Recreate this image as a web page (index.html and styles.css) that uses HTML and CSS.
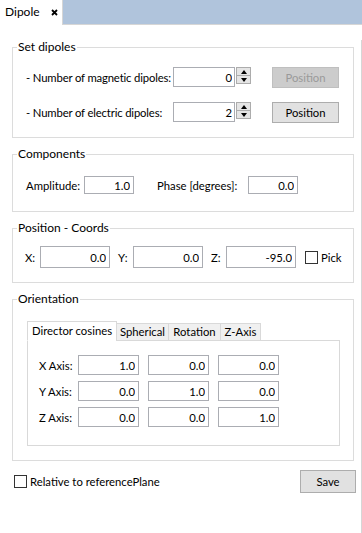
FILE: index.html
```html
<!DOCTYPE html>
<html lang="en">
<head>
  <meta charset="UTF-8" />
  <title>Dipole</title>
  <link rel="stylesheet" href="styles.css">
</head>
<body>
  <div class="doc-tabs">
    <div class="doc-tab">
      Dipole
      <svg class="close" width="7" height="7" viewBox="0 0 7 7">
        <path d="M1 1 L6 6 M6 1 L1 6" stroke="#000" stroke-width="1.8"/>
      </svg>
    </div>
    <div class="doc-tabs-rest"></div>
  </div>

  <div class="panel">
    <fieldset class="group">
      <legend>Set dipoles</legend>
      <div class="group-body dipoles">
        <div class="dipole-row">
          <span class="dipole-label">- Number of magnetic dipoles:</span>
          <div class="spin">
            <input class="field" value="0" readonly>
            <div class="spin-btns">
              <span class="spin-btn"><span class="arrow-up"></span></span>
              <span class="spin-btn"><span class="arrow-down"></span></span>
            </div>
          </div>
          <button class="btn btn-pos" disabled>Position</button>
        </div>
        <div class="dipole-row">
          <span class="dipole-label">- Number of electric dipoles:</span>
          <div class="spin">
            <input class="field" value="2" readonly>
            <div class="spin-btns">
              <span class="spin-btn"><span class="arrow-up"></span></span>
              <span class="spin-btn"><span class="arrow-down"></span></span>
            </div>
          </div>
          <button class="btn btn-pos">Position</button>
        </div>
      </div>
    </fieldset>

    <fieldset class="group">
      <legend>Components</legend>
      <div class="group-body components">
        <span class="amp-label">Amplitude:</span>
        <input class="field comp-field" value="1.0" readonly>
        <span class="phase-label">Phase [degrees]:</span>
        <input class="field comp-field" value="0.0" readonly>
      </div>
    </fieldset>

    <fieldset class="group">
      <legend>Position - Coords</legend>
      <div class="group-body coords">
        <span class="coord-label">X:</span>
        <input class="field coord-field" value="0.0" readonly>
        <span class="coord-label next">Y:</span>
        <input class="field coord-field" value="0.0" readonly>
        <span class="coord-label next">Z:</span>
        <input class="field coord-field" value="-95.0" readonly>
        <label class="check pick"><input type="checkbox"> Pick</label>
      </div>
    </fieldset>

    <fieldset class="group">
      <legend>Orientation</legend>
      <div class="group-body orientation">
        <div class="tab-strip">
          <div class="tab active">Director cosines</div>
          <div class="tab">Spherical</div>
          <div class="tab">Rotation</div>
          <div class="tab">Z-Axis</div>
        </div>
        <div class="tab-pane">
          <div class="axis-row">
            <span class="axis-label">X Axis:</span>
            <input class="field axis-field" value="1.0" readonly>
            <input class="field axis-field" value="0.0" readonly>
            <input class="field axis-field" value="0.0" readonly>
          </div>
          <div class="axis-row">
            <span class="axis-label">Y Axis:</span>
            <input class="field axis-field" value="0.0" readonly>
            <input class="field axis-field" value="1.0" readonly>
            <input class="field axis-field" value="0.0" readonly>
          </div>
          <div class="axis-row">
            <span class="axis-label">Z Axis:</span>
            <input class="field axis-field" value="0.0" readonly>
            <input class="field axis-field" value="0.0" readonly>
            <input class="field axis-field" value="1.0" readonly>
          </div>
        </div>
      </div>
    </fieldset>

    <div class="footer">
      <label class="check"><input type="checkbox"> Relative to referencePlane</label>
      <button class="btn btn-save">Save</button>
    </div>
  </div>
</body>
</html>
```

FILE: styles.css
```css
body {
  margin: 0;
  background: #fff;
  color: #000;
  font-family: Lato, "Noto Sans", sans-serif;
  font-size: 11.3px;
  white-space: nowrap;
}

/* document tab bar */
.doc-tabs {
  display: flex;
  height: 25px;
}
.doc-tab {
  width: 62px;
  box-sizing: border-box;
  padding: 4px 0 0 5px;
  background: #fff;
  line-height: 15px;
  font-size: 12px;
}
.close {
  margin-left: 8px;
}
.doc-tabs-rest {
  flex: 1;
  background: #b0c4dc;
  border-left: 1px solid #d6d6d6;
  border-bottom: 1px solid #d6d6d6;
}

.panel {
  height: 508px;
  box-sizing: border-box;
  border-right: 1px solid #d6d6d6;
  padding: 0 7px 0 12px;
}

/* group boxes */
.group {
  margin: 9px 0 0;
  padding: 0;
  border: 1px solid #dcdcdc;
  min-width: 0;
}
.group:first-child {
  margin-top: 15px;
}
.group legend {
  margin-left: 4px;
  padding: 0 1px;
  line-height: 14px;
  font-size: 12px;
}
.group-body {
  display: flex;
  align-items: center;
}

.field {
  box-sizing: border-box;
  margin: 0;
  border: 1px solid #abadb3;
  background: #fff;
  font: inherit;
  color: #000;
  text-align: right;
  padding: 0 3px;
  outline: none;
}

.btn {
  box-sizing: border-box;
  margin: 0;
  padding: 0;
  border: 1px solid #adadad;
  background: #e1e1e1;
  font: inherit;
  color: #000;
}
.btn:disabled {
  background: #cccccc;
  border-color: #bfbfbf;
  color: #9a9a9a;
}

/* set dipoles */
.dipoles {
  flex-direction: column;
  align-items: stretch;
  gap: 14px;
  padding: 13px 0 14px 13px;
}
.dipole-row {
  display: flex;
  align-items: center;
  height: 21px;
}
.dipole-label {
  width: 147px;
  flex-shrink: 0;
  letter-spacing: -0.15px;
}
.spin {
  display: flex;
  height: 20px;
  align-self: flex-start;
}
.spin .field {
  width: 62px;
  height: 20px;
  padding-right: 2px;
}
.spin-btns {
  display: flex;
  flex-direction: column;
  margin-left: 1px;
}
.spin-btn {
  box-sizing: border-box;
  width: 15px;
  height: 9px;
  border: 1px solid #acacac;
  background: #e5e5e5;
  display: flex;
  align-items: center;
  justify-content: center;
}
.spin-btn + .spin-btn {
  margin-top: -1px;
}
.arrow-up,
.arrow-down {
  width: 0;
  height: 0;
  border-left: 3px solid transparent;
  border-right: 3px solid transparent;
}
.arrow-up {
  border-bottom: 4px solid #000;
}
.arrow-down {
  border-top: 4px solid #000;
}
.btn-pos {
  width: 67px;
  height: 21px;
  margin-left: 21px;
}

/* components */
.components {
  padding: 15px 0 17px 13px;
}
.amp-label {
  width: 58px;
}
.comp-field {
  width: 50px;
  height: 18px;
}
.phase-label {
  margin-left: 23px;
  width: 91px;
}

/* position */
.coords {
  padding: 11px 0 14px 12px;
}
.coord-label {
  width: 15px;
}
.coord-label.next {
  margin-left: 8px;
}
.coord-field {
  width: 70px;
  height: 22px;
}

.check {
  display: flex;
  align-items: center;
  gap: 3px;
}
.check input {
  appearance: none;
  margin: 0;
  width: 13px;
  height: 13px;
  border: 1px solid #333;
  background: #fff;
}
.pick {
  margin-left: 9px;
}

/* orientation */
.orientation {
  flex-direction: column;
  align-items: stretch;
  padding: 15px 13px 14px 14px;
}
.tab-strip {
  display: flex;
  align-items: flex-end;
  position: relative;
  z-index: 1;
  margin-bottom: -1px;
}
.tab {
  box-sizing: border-box;
  height: 18px;
  border: 1px solid #d9d9d9;
  background: #f0f0f0;
  text-align: center;
  line-height: 16px;
  margin-left: -1px;
}
.tab.active {
  height: 20px;
  width: 90px;
  margin-left: 0;
  background: #fff;
  border-bottom-color: #fff;
  line-height: 17px;
}
.tab:nth-child(2),
.tab:nth-child(3) {
  width: 53px;
}
.tab:nth-child(4) {
  width: 41px;
}
.tab-pane {
  border: 1px solid #d9d9d9;
  background: #fff;
  padding: 14px 0 18px 11px;
  display: flex;
  flex-direction: column;
  gap: 6px;
}
.axis-row {
  display: flex;
  align-items: center;
}
.axis-label {
  width: 39px;
}
.axis-field {
  width: 61px;
  height: 20px;
  margin-right: 9px;
}

/* footer */
.footer {
  display: flex;
  align-items: center;
  justify-content: space-between;
  margin: 9px -2px 0 2px;
}
.btn-save {
  width: 56px;
  height: 23px;
}
```
